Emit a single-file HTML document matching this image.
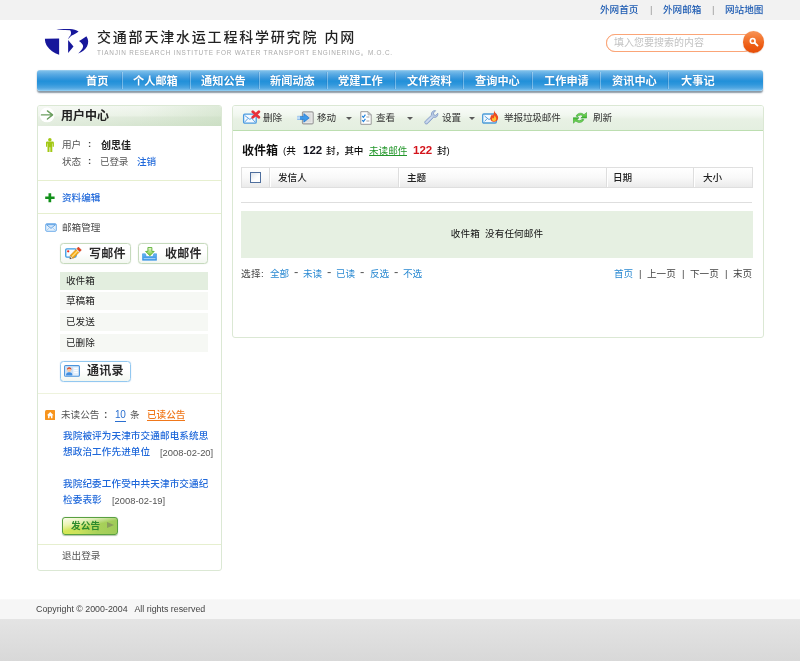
<!DOCTYPE html>
<html lang="zh-CN">
<head>
<meta charset="utf-8">
<title>交通部天津水运工程科学研究院 内网</title>
<style>
*{margin:0;padding:0;box-sizing:border-box;}
html,body{width:800px;height:661px;overflow:hidden;background:#fff;}
body{position:relative;font-family:"Liberation Sans","Noto Sans CJK SC",sans-serif;font-size:9.6px;color:#444;}
a{text-decoration:none;color:inherit;}
.t{will-change:transform;}
.abs{position:absolute;}
.t{position:absolute;white-space:nowrap;line-height:12px;height:12px;}
.blue{color:#1f68da;font-weight:500;}
.b{font-weight:bold;}

/* top bar */
#topbar{position:absolute;left:0;top:0;width:800px;height:20px;background:#f2f2f2;}
#topbar .t{top:4px;color:#1d5bb2;font-size:9.6px;font-weight:500;}
#topbar .sep{color:#999;font-weight:normal;}

/* header */
#title{left:97px;top:27px;font-size:14px;font-weight:500;line-height:20px;height:20px;color:#222;letter-spacing:1.8px;word-spacing:0.5px;}
#sub{left:97px;top:49px;font-size:6.4px;line-height:8px;height:8px;color:#aaa;letter-spacing:0.79px;}

#search{position:absolute;left:606px;top:34px;width:147px;height:18px;border:1px solid #fba577;border-radius:9px;background:#fff;box-shadow:0 0 0.5px #fba577;}
#search .t{left:7px;top:2.3px;font-size:10px;color:#c2c2c2;line-height:12px;}
#sbtn{position:absolute;left:742.7px;top:31.4px;width:21.4px;height:21.4px;border-radius:11px;background:linear-gradient(#f79558 0%,#f37630 35%,#ec5a12 70%,#e64e08 100%);box-shadow:0 0.5px 1px rgba(140,50,0,.35);}

/* nav */
#nav{position:absolute;left:37px;top:70px;width:726px;height:21px;border-radius:3px;background:linear-gradient(#b4daf3 0%,#7dbfea 4%,#5aaae3 20%,#3797dc 40%,#2190d9 53%,#2f97dc 68%,#4fa6e1 85%,#6cb7e9 93%,#98d3f5 100%);box-shadow:0 1.5px 1.5px rgba(70,90,110,.62);}
#nav .t{top:3.7px;font-size:11.2px;font-weight:bold;color:#fff;line-height:14px;height:14px;text-shadow:0 0 1px rgba(20,70,130,.35);}
#nav i{position:absolute;top:2px;width:1px;height:17px;background:rgba(255,255,255,.33);box-shadow:-1px 0 0 rgba(20,80,150,.14);}

/* sidebar */
#side{position:absolute;left:37px;top:105px;width:185px;height:466px;border:1px solid #dbe8d4;border-radius:3px;background:#fff;}
#sidehd{position:absolute;left:0;top:0;width:183px;height:19.5px;background:linear-gradient(90deg,rgba(255,255,255,.3) 0%,rgba(255,255,255,0) 55%,rgba(185,212,175,.35) 100%),linear-gradient(#f2f7f0 0%,#eaf2e6 47%,#dfeada 57%,#d6e5d0 100%);border-radius:2px 2px 0 0;}
.hr{position:absolute;left:0;width:183px;height:1px;background:#e6efcf;}
.row{position:absolute;left:22px;width:148px;height:18px;background:#f6f8f4;}
.row .t{left:6.3px;top:3px;color:#222;}
.btn{position:absolute;height:21px;border:1px solid #c6dabd;border-radius:3.5px;background:linear-gradient(#ffffff 45%,#f3f7f1 100%);box-shadow:0 0 1px rgba(140,170,125,.35);}
.btn .t{font-size:12px;font-weight:bold;color:#2a2a2a;letter-spacing:0.2px;line-height:14px;height:14px;top:2.5px;}

/* main */
#main{position:absolute;left:232px;top:105px;width:532px;height:233px;border:1px solid #dbe8d4;border-radius:3px;background:#fff;}
#tb{position:absolute;left:0;top:0;width:530px;height:25px;background:linear-gradient(#f9fcf9 0%,#f1f7ef 38%,#e8f1e4 55%,#e4efe0 100%);border-bottom:1px solid #bcdeb0;border-radius:2px 2px 0 0;}
#tb .t{top:6.1px;color:#333;}
.dd{position:absolute;top:11px;width:0;height:0;border-left:3px solid transparent;border-right:3px solid transparent;border-top:3.4px solid #5a5a5a;}
#th{position:absolute;left:8px;top:61px;width:512px;height:21px;border:1px solid #dfdfdf;background:linear-gradient(#ffffff 0%,#f9f9f9 50%,#ebebeb 100%);}
#th i{position:absolute;top:0;width:1px;height:19px;background:#dedede;box-shadow:1px 0 0 #fff;}
#th .t{top:3.9px;color:#222;font-weight:500;}
#empty{position:absolute;left:8px;top:105px;width:512px;height:47px;background:#e6f0e2;}
.lb{color:#2b8ad2;}

/* footer */
#foot{position:absolute;left:0;top:599px;width:800px;height:20px;background:linear-gradient(#fbfbfb 0,#f6f6f6 1px,#f6f6f6 100%);}
#foot .t{left:36.2px;top:4.4px;font-size:8.85px;color:#444;}
#bot{position:absolute;left:0;top:619px;width:800px;height:42px;background:linear-gradient(#e4e4e4,#d8d8d8);}
</style>
</head>
<body>

<div id="topbar">
  <a class="t" style="left:600px">外网首页</a>
  <span class="t sep" style="left:650px">|</span>
  <a class="t" style="left:662.5px">外网邮箱</a>
  <span class="t sep" style="left:711.5px">|</span>
  <a class="t" style="left:724.5px">网站地图</a>
</div>

<!-- logo -->
<svg class="abs" style="left:40px;top:24px" width="52" height="34" viewBox="0 0 52 34">
  <g fill="#17179b">
    <path d="M4.9 14.7 L19.1 14.5 L19.1 30.8 C13.8 29.2 9.6 26 7 22 C5.6 19.6 4.9 17.2 4.9 14.7 Z"/>
    <path d="M16.4 5.9 C20 5 25 4.7 30.2 5 C33.4 5.2 36.2 6 38.6 7.4 C36.4 9 34 10.6 31.8 11.6 C30.6 12.6 29.4 13.6 28.2 15.2 C28.4 13.6 29.4 12.4 30.4 11.4 C31.4 9.6 31.2 7.6 30.2 6.2 C25.4 5.8 20.6 5.9 16.4 5.9 Z"/>
    <path d="M28.1 16 L33.5 22.5 L28.1 29 Z"/>
    <path d="M46.4 12.3 C48.6 15.4 48.8 19 47 22.4 C45.2 25.6 42 28 38.2 29.4 C41 26.8 42.8 24.6 43.1 22.4 C43.3 20.4 41.2 18.6 39 16.9 C41.4 15.8 44.2 14.2 46.4 12.3 Z"/>
  </g>
</svg>
<div class="t" id="title">交通部天津水运工程科学研究院 内网</div>
<div class="t" id="sub">TIANJIN RESEARCH INSTITUTE FOR WATER TRANSPORT ENGINERING。M.O.C.</div>

<div id="search"><span class="t">填入您要搜索的内容</span></div>
<div id="sbtn">
  <svg class="abs" style="left:0;top:0" width="21.4" height="21.4" viewBox="0 0 21.4 21.4"><circle cx="9.7" cy="9.9" r="2.35" fill="none" stroke="#fff" stroke-width="1.6"/><path d="M11.6 11.8 L14.5 14.6" stroke="#fff" stroke-width="1.9" stroke-linecap="round"/></svg>
</div>

<div id="nav">
  <a class="t" style="left:49px">首页</a><i style="left:85px"></i>
  <a class="t" style="left:95.5px">个人邮箱</a><i style="left:153.25px"></i>
  <a class="t" style="left:164px">通知公告</a><i style="left:221.5px"></i>
  <a class="t" style="left:232.5px">新闻动态</a><i style="left:289.75px"></i>
  <a class="t" style="left:301px">党建工作</a><i style="left:358px"></i>
  <a class="t" style="left:369.5px">文件资料</a><i style="left:426.25px"></i>
  <a class="t" style="left:438px">查询中心</a><i style="left:494.5px"></i>
  <a class="t" style="left:506.5px">工作申请</a><i style="left:562.75px"></i>
  <a class="t" style="left:575px">资讯中心</a><i style="left:631px"></i>
  <a class="t" style="left:643.5px">大事记</a>
</div>

<div id="side">
  <div id="sidehd">
    <svg class="abs" style="left:1px;top:0.5px" width="16" height="16" viewBox="0 0 16 16"><circle cx="8.1" cy="7.9" r="7.4" fill="#fff"/><path d="M2.4 7.9 H13.4 M8.4 3.9 L13.6 7.9 L8.4 12" fill="none" stroke="#6a9e5e" stroke-width="1.35" stroke-linecap="round" stroke-linejoin="round"/></svg>
    <div class="t b" style="left:23px;top:3px;font-size:12px;line-height:14px;height:14px;color:#222">用户中心</div>
  </div>

  <!-- user -->
  <svg class="abs" style="left:8px;top:32px" width="8" height="14" viewBox="0 0 8 14"><g fill="#a2c814"><circle cx="3.85" cy="1.8" r="1.75"/><path d="M1 3.6 H6.8 Q7.9 3.6 7.9 4.7 V8.8 H6.7 V5.6 H6.3 V14 H4.3 V9.2 H3.5 V14 H1.5 V5.6 H1.1 V8.8 H-0.1 V4.7 Q-0.1 3.6 1 3.6Z"/></g></svg>
  <div class="t" style="left:24px;top:33px;color:#555">用户</div><div class="t b" style="left:49.9px;top:32.4px;color:#444">:</div>
  <div class="t b" style="left:63px;top:33.5px;color:#222;font-size:10px">创思佳</div>
  <div class="t" style="left:24px;top:49.5px;color:#555">状态</div><div class="t b" style="left:49.9px;top:48.6px;color:#444">:</div>
  <div class="t" style="left:62.2px;top:49.5px;color:#555;letter-spacing:-0.2px">已登录</div>
  <a class="t blue" style="left:98.8px;top:49.5px">注销</a>
  <div class="hr" style="top:74px"></div>

  <svg class="abs" style="left:7.4px;top:86.8px" width="10" height="10" viewBox="0 0 10 10"><path d="M3.5 0.2 H6.2 V3.4 H9.6 V6 H6.2 V9.2 H3.5 V6 H0.2 V3.4 H3.5Z" fill="#12901a"/></svg>
  <a class="t blue" style="left:24.3px;top:85.5px">资料编辑</a>
  <div class="hr" style="top:107px"></div>

  <!-- mailbox -->
  <svg class="abs" style="left:7px;top:116.6px" width="12" height="10" viewBox="0 0 12 10"><rect x="0.7" y="0.7" width="10.6" height="7.6" rx="1" fill="#e4f0fc" stroke="#6fadea" stroke-width="1"/><path d="M1.4 1.6 L6 5.4 L10.6 1.6 Z" fill="#cfe4fa" stroke="#5a9ee2" stroke-width="0.9"/><path d="M1.4 7.6 L4.4 4.8 M10.6 7.6 L7.6 4.8" fill="none" stroke="#8bbdee" stroke-width="0.7"/></svg>
  <div class="t" style="left:24px;top:115.6px;color:#444">邮箱管理</div>

  <div class="btn" style="left:22px;top:137px;width:71px">
    <svg class="abs" style="left:4px;top:3px" width="17" height="13" viewBox="0 0 17 13"><rect x="0.75" y="1.85" width="10.3" height="8.2" rx="1" fill="#fafdff" stroke="#3a9ae2" stroke-width="1.3"/><circle cx="3.2" cy="4.3" r="1.15" fill="#f0281a"/><path d="M4.8 11.9 L5.4 8.2 L8.4 11.2 Z" fill="#f3dcb8" stroke="#8a6a4a" stroke-width="0.4"/><path d="M4.8 11.9 L5.05 10.3 L6.4 11.6 Z" fill="#3a3a3a"/><path d="M5.4 8.2 L11.1 2.35 L14.1 5.35 L8.4 11.2 Z" fill="#f7ab18" stroke="#c9780c" stroke-width="0.5"/><path d="M6.9 9.7 L12.6 3.85" stroke="#ffe488" stroke-width="1.1"/><path d="M11.1 2.35 L11.8 1.65 L14.8 4.65 L14.1 5.35 Z" fill="#e8eef4"/><path d="M11.8 1.65 L13.4 0 L16.4 3 L14.8 4.65 Z" fill="#e2421e" stroke="#b8300f" stroke-width="0.4"/></svg>
    <span class="t" style="left:28.4px">写邮件</span>
  </div>
  <div class="btn" style="left:100px;top:137px;width:70px">
    <svg class="abs" style="left:3px;top:2.5px" width="15" height="14" viewBox="0 0 15 14"><defs><linearGradient id="ga" x1="0" y1="0" x2="0" y2="1"><stop offset="0" stop-color="#eefad8"/><stop offset="1" stop-color="#74c62e"/></linearGradient><linearGradient id="gb" x1="0" y1="0" x2="0" y2="1"><stop offset="0" stop-color="#6cb8f2"/><stop offset="1" stop-color="#2b8de4"/></linearGradient></defs><path d="M0.5 6.8 H3.4 L4.3 9.6 H10.9 L11.8 6.8 H14.6 V13.3 H0.5Z" fill="url(#gb)" stroke="#3a94e4" stroke-width="0.6"/><path d="M1.6 11.7 H13.5" stroke="#d6ebfc" stroke-width="0.8"/><path d="M5.9 0.5 H9.9 V4.4 H12.2 L7.9 8.7 L3.6 4.4 H5.9Z" fill="url(#ga)" stroke="#4aa822" stroke-width="0.8" stroke-linejoin="round"/></svg>
    <span class="t" style="left:25.8px">收邮件</span>
  </div>

  <div class="row" style="top:166px;background:#e3eedf"><span class="t">收件箱</span></div>
  <div class="row" style="top:186px"><span class="t">草稿箱</span></div>
  <div class="row" style="top:207px"><span class="t">已发送</span></div>
  <div class="row" style="top:228px"><span class="t">已删除</span></div>

  <div class="btn" style="left:22px;top:255px;width:71px;border:1.5px solid #93c8f0;box-shadow:0 0 1px rgba(80,150,220,.5)">
    <svg class="abs" style="left:3px;top:2.6px" width="16" height="12" viewBox="0 0 16 12"><rect x="0.6" y="0.6" width="14.8" height="10.6" rx="1" fill="#e3effb" stroke="#4b94dc" stroke-width="1.1"/><rect x="1.4" y="1.4" width="7.6" height="9" fill="#c9e0f7"/><path d="M2 10.4 Q2 7.2 5.2 7.2 Q8.4 7.2 8.4 10.4Z" fill="#3f8de0"/><circle cx="5.2" cy="5" r="2" fill="#f6c9a4"/><path d="M3 5 Q2.9 2.2 5.2 2.2 Q7.5 2.2 7.4 5 Q6.4 3.6 5.2 3.8 Q4 3.6 3 5Z" fill="#d8431e"/><path d="M10.2 3.6 H13.8 M10.2 5.6 H13.8 M10.2 7.6 H13.8" stroke="#fff" stroke-width="1"/></svg>
    <span class="t" style="left:25.8px;top:2.3px">通讯录</span>
  </div>
  <div class="hr" style="top:286.5px;height:1.5px;background:#eef3dd"></div>

  <!-- notices -->
  <svg class="abs" style="left:6.6px;top:303.8px" width="10.5" height="10.5" viewBox="0 0 11 11"><rect x="0" y="0" width="11" height="11" rx="1.6" fill="#f7941d"/><path d="M5.5 2.2 L9 5.6 H7.8 V8.6 H6.3 V6.6 H4.7 V8.6 H3.2 V5.6 H2Z" fill="#fff"/></svg>
  <div class="t" style="left:23px;top:303.2px;color:#555">未读公告</div><div class="t b" style="left:65.5px;top:303px;color:#555;font-size:10px">:</div>
  <a class="t" style="left:76.6px;top:302.6px;color:#2a6fd0;border-bottom:1px solid #2a6fd0;height:13px;font-size:10px;letter-spacing:-0.3px">10</a>
  <div class="t" style="left:92px;top:303.2px;color:#555">条</div>
  <a class="t" style="left:109.4px;top:303.2px;color:#f0771a;font-weight:500;border-bottom:1px solid #f0771a;height:12.4px">已读公告</a>

  <a class="t blue" style="left:25px;top:324px;letter-spacing:0.1px">我院被评为天津市交通邮电系统思</a>
  <a class="t blue" style="left:25px;top:340px;letter-spacing:0.1px">想政治工作先进单位</a>
  <div class="t" style="left:122px;top:340.5px;color:#555;font-size:9.4px">[2008-02-20]</div>
  <a class="t blue" style="left:25px;top:372px;letter-spacing:0.1px">我院纪委工作受中共天津市交通纪</a>
  <a class="t blue" style="left:25px;top:388px;letter-spacing:0.1px">检委表彰</a>
  <div class="t" style="left:73.5px;top:388.5px;color:#555;font-size:9.4px">[2008-02-19]</div>

  <div class="abs" style="left:23.5px;top:410.8px;width:56px;height:18px;border:1px solid #58a040;border-radius:3px;background:linear-gradient(168deg,rgba(255,255,255,.9) 0%,rgba(255,255,255,.55) 28%,rgba(255,255,255,0) 50%),linear-gradient(90deg,#d6e854 0%,#cbe25c 30%,#aad25a 62%,#9fcb58 100%);box-shadow:0 0.5px 1px rgba(60,100,40,.4)">
    <span class="t b" style="left:8.4px;top:2.4px;color:#2e8b2e;font-size:9.6px;letter-spacing:0.1px">发公告</span>
    <span class="abs" style="left:44.5px;top:4.2px;width:0;height:0;border-top:3.8px solid transparent;border-bottom:3.8px solid transparent;border-left:7px solid #8a9e5c"></span>
  </div>
  <div class="hr" style="top:438px"></div>
  <a class="t" style="left:24px;top:444px;color:#555">退出登录</a>
</div>

<div id="main">
  <div id="tb">
    <!-- delete -->
    <svg class="abs" style="left:9px;top:4px" width="19" height="15" viewBox="0 0 19 15"><rect x="1.6" y="4.2" width="12.6" height="9" rx="1.2" fill="#f3f9ff" stroke="#4a9ae0" stroke-width="1.3"/><path d="M2.6 5.4 L7.9 9.4 L13.2 5.4 M2.6 12.2 L6 8.4 M13.2 12.2 L9.8 8.4" fill="none" stroke="#4a9ae0" stroke-width="0.9"/><path d="M10.8 1.7 L16.8 7.3 M16.8 1.7 L10.8 7.3" stroke="#e8303a" stroke-width="2.8" stroke-linecap="round"/></svg>
    <span class="t" style="left:30px">删除</span>
    <!-- move -->
    <svg class="abs" style="left:64px;top:5px" width="17" height="14" viewBox="0 0 17 14"><rect x="5.4" y="0.9" width="10.8" height="12" rx="1.2" fill="#ececec" stroke="#9a9a9a" stroke-width="1.1"/><rect x="7" y="2.6" width="7.6" height="8.6" fill="#dcdcdc"/><path d="M0.4 5.4 H6.8 V2.6 L12.2 6.9 L6.8 11.2 V8.4 H0.4Z" fill="#3f9aea" stroke="#1f74cc" stroke-width="0.7"/><path d="M0 5.2 H3 V8.6 H0Z" fill="#e8f3fd" opacity="0.75"/></svg>
    <span class="t" style="left:84px">移动</span>
    <span class="dd" style="left:113.2px"></span>
    <!-- view -->
    <svg class="abs" style="left:127px;top:4.6px" width="12" height="14" viewBox="0 0 12 14"><path d="M0.8 0.7 H8 L11.2 3.9 V13.3 H0.8Z" fill="#fff" stroke="#999" stroke-width="1"/><path d="M8 0.7 V3.9 H11.2Z" fill="#ddd" stroke="#999" stroke-width="0.7"/><path d="M2.2 5 L3.4 6.3 L5.4 3.6 M2.2 9.2 L3.4 10.5 L5.4 7.8" fill="none" stroke="#2284dc" stroke-width="1.2"/><path d="M6.4 6 H9.4 M6.4 10 H9.4" stroke="#999" stroke-width="0.9"/></svg>
    <span class="t" style="left:143px">查看</span>
    <span class="dd" style="left:174px"></span>
    <!-- settings -->
    <svg class="abs" style="left:191px;top:4px" width="15" height="15" viewBox="0 0 15 15"><path d="M13.8 3.2 C14.2 5.2 13.2 7 11.4 7.4 C10.8 7.5 10.2 7.5 9.6 7.3 L3.8 13.4 C3 14.2 1.8 14.2 1.2 13.5 C0.5 12.8 0.6 11.8 1.3 11.1 L7.5 5.2 C7.1 3.6 7.7 1.8 9.3 1 C10 0.6 10.8 0.5 11.6 0.7 L9.4 3 L9.9 4.9 L11.7 5.4Z" fill="#b6c8e4" stroke="#8098c4" stroke-width="0.8"/><path d="M2 12.6 L8 6.6" stroke="#e4ecf8" stroke-width="0.9"/></svg>
    <span class="t" style="left:209px">设置</span>
    <span class="dd" style="left:235.6px"></span>
    <!-- spam -->
    <svg class="abs" style="left:249px;top:4px" width="17" height="14.5" viewBox="0 0 17 14.5"><rect x="0.7" y="4" width="13.6" height="9" rx="1.1" fill="#f3f9ff" stroke="#4a9ad8" stroke-width="1.3"/><path d="M2.6 6 L7 9.6 L9.2 8 M2.6 11.4 L5.4 8.4" fill="none" stroke="#4a9ad8" stroke-width="0.9"/><path d="M12 0.3 C12.2 2.2 14.6 3.6 15.8 6 C16.8 8.4 15.6 11.4 12.8 11.8 C9.8 12.2 7.8 10 8.4 7.4 C8.8 5.8 9.8 5.2 10 4 C10.6 4.6 10.8 5.2 10.8 5.8 C11.8 4.4 12.2 2.4 12 0.3Z" fill="#ee4a1e"/><path d="M12.4 5.2 C13.8 6.8 14.8 8.4 14 10 C13.4 11.2 11.4 11.4 10.4 10.4 C9.6 9.4 10 8.2 10.8 7.4 C11 8 11.2 8.2 11.6 8.4 C12.2 7.4 12.4 6.4 12.4 5.2Z" fill="#ffc22e"/></svg>
    <span class="t" style="left:270.5px;letter-spacing:-0.15px">举报垃圾邮件</span>
    <!-- refresh -->
    <svg class="abs" style="left:340px;top:6.4px" width="14.4" height="12" viewBox="0 0 14.4 12"><defs><linearGradient id="gr" x1="0" y1="0" x2="0" y2="1"><stop offset="0" stop-color="#8ee26a"/><stop offset="1" stop-color="#3fb62e"/></linearGradient></defs><g fill="url(#gr)" stroke="#2b9a2e" stroke-width="0.55" stroke-linejoin="round"><path d="M3.1 4.2 C4.2 1 8.4 0.2 11 2.7 L13.7 0.5 V6 H7.9 L10 4 C8.4 2.5 5.9 2.8 4.9 4.5 Z"/><path d="M3.1 4.2 C4.2 1 8.4 0.2 11 2.7 L13.7 0.5 V6 H7.9 L10 4 C8.4 2.5 5.9 2.8 4.9 4.5 Z" transform="rotate(180 6.95 5.85)"/></g></svg>
    <span class="t" style="left:359.8px">刷新</span>
  </div>

  <!-- heading -->
  <div class="t b" style="left:9px;top:37.8px;font-size:12px;line-height:14px;height:14px;color:#111">收件箱</div>
  <div class="t" style="left:50.4px;top:38.6px;color:#111;font-weight:500">(共</div>
  <div class="t b" style="left:69.6px;top:37.8px;color:#14141e;font-size:11.5px">122</div>
  <div class="t" style="left:92.6px;top:38.6px;color:#111;font-weight:500;letter-spacing:-0.35px">封，其中</div>
  <a class="t" style="left:136px;top:38.8px;color:#22962a;border-bottom:1px solid #22962a;height:10.8px">未读邮件</a>
  <div class="t b" style="left:180.2px;top:37.8px;color:#d4141c;font-size:11.5px">122</div>
  <div class="t" style="left:204px;top:38.6px;color:#111;font-weight:500">封)</div>

  <div id="th">
    <span class="abs" style="left:8px;top:4px;width:11px;height:11px;border:1px solid #4f6f9e;background:linear-gradient(135deg,#dfe5ec,#fff 60%);"></span>
    <i style="left:27px"></i>
    <span class="t" style="left:35.7px">发信人</span>
    <i style="left:156px"></i>
    <span class="t" style="left:165.4px">主题</span>
    <i style="left:364px"></i>
    <span class="t" style="left:370.5px">日期</span>
    <i style="left:451px"></i>
    <span class="t" style="left:460.7px">大小</span>
  </div>

  <div class="abs" style="left:8px;top:96px;width:511px;height:1px;background:#dedede"></div>
  <div id="empty"><div class="t" style="left:0;width:512px;text-align:center;top:17.2px;color:#111;letter-spacing:0.1px;word-spacing:2.4px">收件箱 没有任何邮件</div></div>

  <div class="t" style="left:8.2px;top:161.8px;color:#444;letter-spacing:0.4px">选择:</div>
  <a class="t lb" style="left:36.6px;top:161.8px">全部</a>
  <span class="t" style="left:60.5px;top:160.2px;color:#555;font-size:13px">-</span>
  <a class="t lb" style="left:69.6px;top:161.8px">未读</a>
  <span class="t" style="left:93.8px;top:160.2px;color:#555;font-size:13px">-</span>
  <a class="t lb" style="left:102.9px;top:161.8px">已读</a>
  <span class="t" style="left:127.3px;top:160.2px;color:#555;font-size:13px">-</span>
  <a class="t lb" style="left:136.6px;top:161.8px">反选</a>
  <span class="t" style="left:160.8px;top:160.2px;color:#555;font-size:13px">-</span>
  <a class="t lb" style="left:169.7px;top:161.8px">不选</a>

  <a class="t lb" style="left:380.9px;top:161.8px">首页</a>
  <span class="t" style="left:405.8px;top:161.5px;color:#444">|</span>
  <a class="t" style="left:413.9px;top:161.8px;color:#444">上一页</a>
  <span class="t" style="left:448.8px;top:161.5px;color:#444">|</span>
  <a class="t" style="left:456.7px;top:161.8px;color:#444">下一页</a>
  <span class="t" style="left:492px;top:161.5px;color:#444">|</span>
  <a class="t" style="left:499.7px;top:161.8px;color:#444">末页</a>
</div>

<div id="foot"><div class="t">Copyright © 2000-2004 &nbsp; All rights reserved</div></div>
<div id="bot"></div>

</body>
</html>
